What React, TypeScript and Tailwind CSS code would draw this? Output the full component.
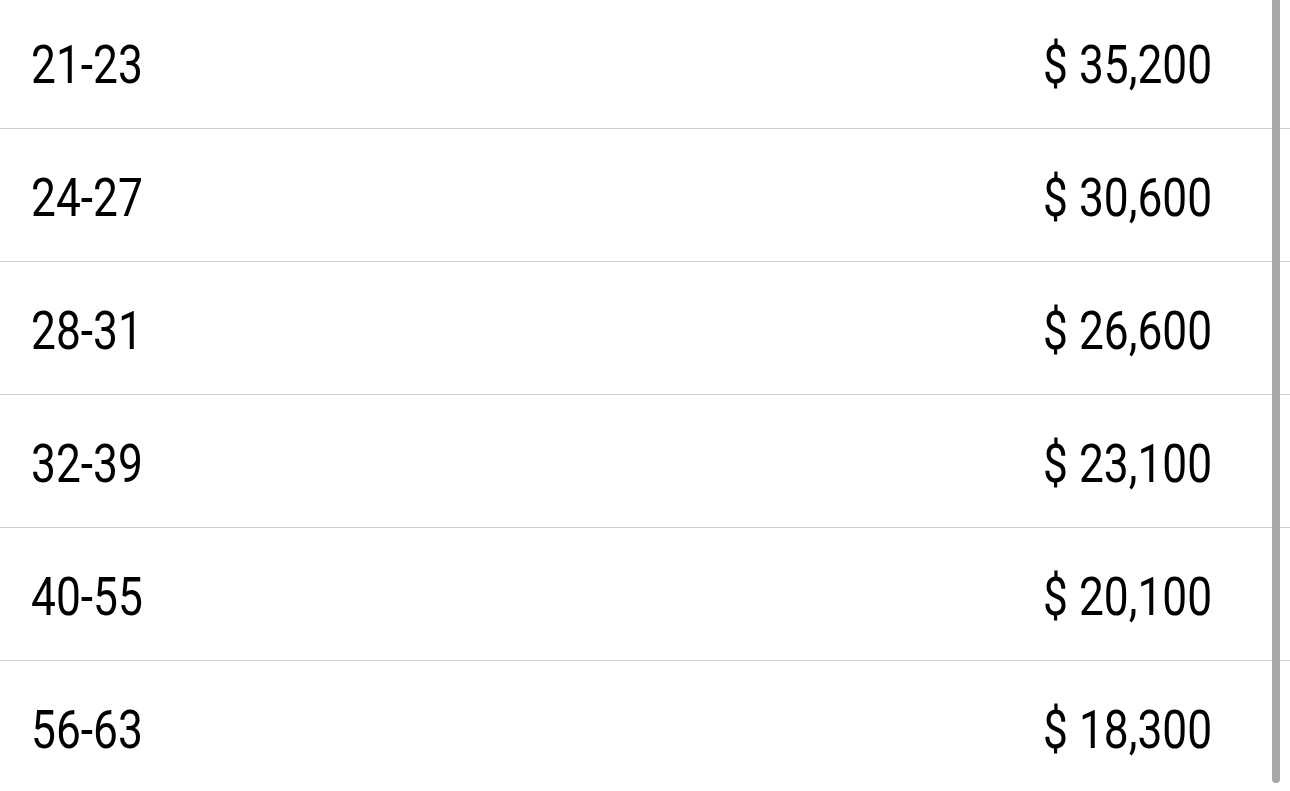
const rows = [
  { age: "21-23", price: "$ 35,200" },
  { age: "24-27", price: "$ 30,600" },
  { age: "28-31", price: "$ 26,600" },
  { age: "32-39", price: "$ 23,100" },
  { age: "40-55", price: "$ 20,100" },
  { age: "56-63", price: "$ 18,300" },
];

function Cell({ text, right }: { text: string; right?: boolean }) {
  return (
    <span
      className={`inline-block scale-x-[0.82] text-[54px] leading-none text-black ${
        right ? "origin-right" : "origin-left"
      }`}
    >
      {text}
    </span>
  );
}

export default function App() {
  return (
    <div className="relative h-[791px] w-[1290px] overflow-hidden bg-white font-['Roboto',sans-serif]">
      <div className="-mt-[4px] flex flex-col">
        {rows.map((r) => (
          <div
            key={r.age}
            className="flex h-[133px] items-center justify-between border-b border-[#cfcfcf] pl-[31px] pr-[78px] pt-[5px]"
          >
            <Cell text={r.age} />
            <Cell text={r.price} right />
          </div>
        ))}
      </div>
      <div className="absolute right-[10px] top-0 h-[783px] w-[8px] rounded-b-full bg-[#a8a8a8]" />
    </div>
  );
}
